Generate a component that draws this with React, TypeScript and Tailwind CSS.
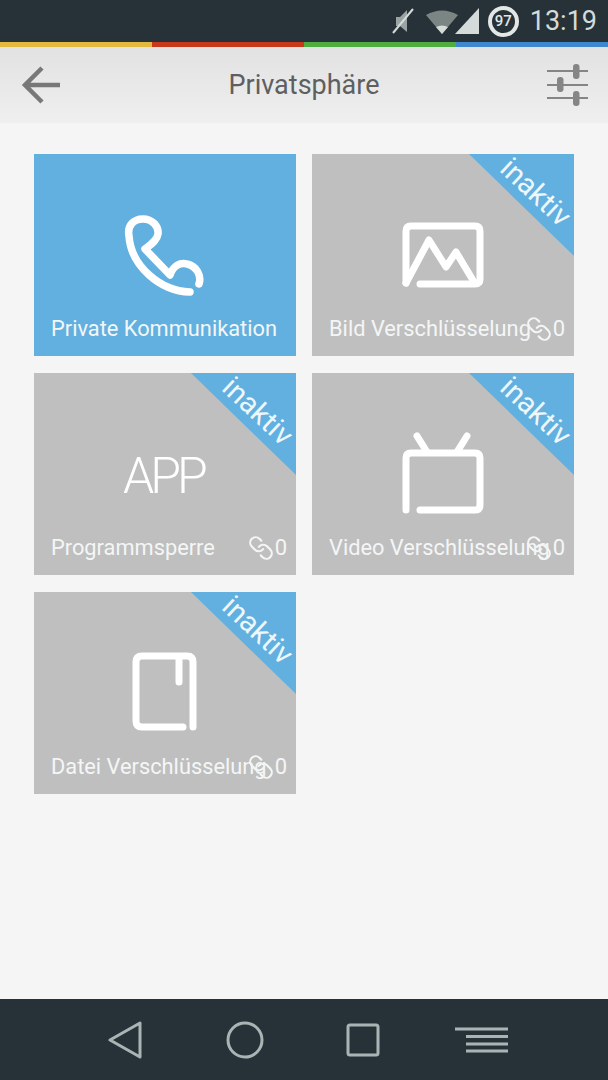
import type { ReactNode } from 'react'
import { Link } from 'lucide-react'

function PhoneIcon() {
  return (
    <svg width="90" height="90" viewBox="120 208 90 90" fill="none" stroke="white" strokeWidth="7.5" strokeLinecap="round" strokeLinejoin="round">
      <path d="M190 291C160 290 131 265 129 235C127 224 134 218 143 218C152 218 159 225 158 233C157 240 150 244 145 248L170 274C173 265 180 261 187 263C196 265 202 274 199 283" />
    </svg>
  )
}

function ImageIcon() {
  return (
    <svg width="90" height="72" viewBox="399 218 90 72" fill="none" stroke="white" strokeWidth="7" strokeLinecap="round" strokeLinejoin="round">
      <path d="M407 283V231Q407 226 412 226H476Q481 226 481 231V279Q481 284 476 284H421" />
      <path d="M407 283L430 240L447 267L457 252L475 282" />
    </svg>
  )
}

function TvIcon() {
  return (
    <svg width="90" height="88" viewBox="399 430 90 88" fill="none" stroke="white" strokeWidth="7" strokeLinecap="round" strokeLinejoin="round">
      <path d="M407 511V459Q407 454 412 454H476Q481 454 481 459V506Q481 511 476 511H421" />
      <path d="M418 437L428 453M468 437L458 453" />
    </svg>
  )
}

function FileIcon() {
  return (
    <svg width="72" height="86" viewBox="129 651 72 86" fill="none" stroke="white" strokeWidth="7" strokeLinecap="round" strokeLinejoin="round">
      <path d="M193 729V664Q193 658 187 658H142Q136 658 136 664V723Q136 729 142 729H183" />
      <path d="M179 659V684" />
    </svg>
  )
}

function Tile({ label, icon, inactive = true }: { label: string; icon: ReactNode; inactive?: boolean }) {
  return (
    <div className={`relative h-[202px] ${inactive ? 'bg-[#bfbfbf]' : 'bg-[#62b0df]'}`}>
      {inactive && (
        <>
          <div className="absolute right-0 top-0 h-[102px] w-[105px] bg-[#62b0df] [clip-path:polygon(0_0,100%_0,100%_100%)]" />
          <span className="absolute right-[-12px] top-[23px] w-[100px] rotate-[43deg] text-center text-[29px] leading-[30px] text-[#eef7fc]">
            inaktiv
          </span>
        </>
      )}
      <div className="mt-[50px] flex h-[100px] items-center justify-center">{icon}</div>
      <div className="mt-[11px] h-7 whitespace-nowrap pl-[17px] text-[21.8px] leading-7 text-[#f4f6f6]">{label}</div>
      {inactive && (
        <div className="absolute bottom-[13px] right-[9px] flex items-center text-[22px] leading-7 text-[#f4f6f6]">
          <Link className="mr-[1px] h-[26px] w-[26px] -scale-x-100" strokeWidth={2} />
          <span>0</span>
        </div>
      )}
    </div>
  )
}

export default function App() {
  return (
    <div className="flex h-[1080px] w-[608px] flex-col overflow-hidden bg-[#f5f5f5] font-['Roboto',sans-serif]">
      <div className="flex h-[42px] items-center justify-end bg-[#263238] pr-[11px]">
        <svg width="24" height="28" viewBox="0 0 24 28" fill="none" className="mr-[10px]">
          <path d="M5 10H9L16 3V25L9 19H5Z" fill="#9aa3a3" />
          <path d="M2 26L22 2" stroke="#d5dbd9" strokeWidth="2" />
        </svg>
        <svg width="55" height="28" viewBox="0 0 55 28" className="mr-[8px]">
          <path d="M1 8Q17 -1 33 8L17 27Z" fill="#7b8584" />
          <path d="M11 20Q17 17 23 20L17 27Z" fill="#d5dbd9" />
          <path d="M30 27L54 1V27Z" fill="#d5dbd9" />
        </svg>
        <div className="mr-[11px] flex h-[31px] w-[31px] items-center justify-center rounded-full border-[4px] border-[#e3e7e6] text-[15px] font-medium leading-none text-[#e3e7e6]">
          97
        </div>
        <span className="text-[27px] leading-none text-[#d5dbd9]">13:19</span>
      </div>

      <div className="flex h-[5px]">
        <div className="flex-1 bg-[#e2b93d]" />
        <div className="flex-1 bg-[#c8391c]" />
        <div className="flex-1 bg-[#4fae3f]" />
        <div className="flex-1 bg-[#3f88d0]" />
      </div>

      <div className="flex h-[76px] items-center justify-between bg-gradient-to-b from-[#e2e2e2] to-[#efefef] pl-[20px] pr-[19px]">
        <svg width="42" height="38" viewBox="0 0 42 38" fill="none" stroke="#787878" strokeWidth="4.5">
          <path d="M40 19H5M22 2L5 19L22 36" />
        </svg>
        <span className="text-[27px] leading-none text-[#5f5f5f]">Privatsphäre</span>
        <svg width="43" height="44" viewBox="0 0 43 44" fill="none" stroke="#858585" strokeWidth="2">
          <path d="M1 8H42M1 22H42M1 35H42" />
          <rect x="27" y="1" width="6.5" height="15" rx="3" fill="#858585" stroke="none" />
          <rect x="11" y="14" width="6.5" height="15" rx="3" fill="#858585" stroke="none" />
          <rect x="27" y="28" width="6.5" height="15" rx="3" fill="#858585" stroke="none" />
        </svg>
      </div>

      <main className="flex-1 pl-[34px] pr-[34px] pt-[31px]">
        <div className="grid grid-cols-2 gap-x-[16px] gap-y-[17px]">
          <Tile label="Private Kommunikation" icon={<PhoneIcon />} inactive={false} />
          <Tile label="Bild Verschlüsselung" icon={<ImageIcon />} />
          <Tile label="Programmsperre" icon={<span className="pr-[3px] pt-[5px] text-[50px] font-light leading-none tracking-[-4px] text-white">APP</span>} />
          <Tile label="Video Verschlüsselung" icon={<TvIcon />} />
          <Tile label="Datei Verschlüsselung" icon={<FileIcon />} />
        </div>
      </main>

      <div className="flex h-[81px] items-center bg-[#263238] pl-[107px]">
        <svg width="36" height="38" viewBox="0 0 36 38" fill="none" stroke="#a9b5b5" strokeWidth="3" strokeLinejoin="round">
          <path d="M3 19L33 2V36Z" />
        </svg>
        <svg width="38" height="38" viewBox="0 0 38 38" fill="none" stroke="#a9b5b5" strokeWidth="3" className="ml-[83px]">
          <circle cx="19" cy="19" r="17" />
        </svg>
        <svg width="34" height="34" viewBox="0 0 34 34" fill="none" stroke="#a9b5b5" strokeWidth="3" className="ml-[82px]">
          <rect x="2" y="2" width="30" height="30" rx="2" />
        </svg>
        <svg width="53" height="26" viewBox="0 0 53 26" fill="none" stroke="#a9b5b5" strokeWidth="3" className="ml-[75px]">
          <path d="M0 2H53M11 9.5H53M11 17H53M11 24H53" />
        </svg>
      </div>
    </div>
  )
}
